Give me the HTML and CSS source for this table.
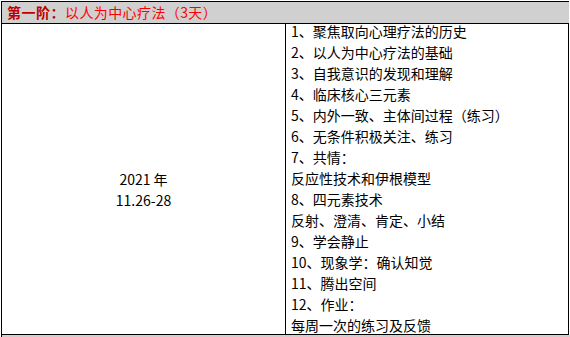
FILE: index.html
```html
<!DOCTYPE html>
<html lang="zh-CN">
<head>
<meta charset="utf-8">
<title>第一阶</title>
<link rel="stylesheet" href="styles.css">
</head>
<body>
<div class="sheet">
  <div class="header"><span class="stage">第一阶：</span><span class="title">以人为中心疗法（3天）</span></div>
  <div class="row">
    <div class="date">
      <div class="date-text">2021 年<br>11.26-28</div>
    </div>
    <div class="content">
      <div class="lines">
        1、聚焦取向心理疗法的历史<br>
        2、以人为中心疗法的基础<br>
        3、自我意识的发现和理解<br>
        4、临床核心三元素<br>
        5、内外一致、主体间过程（练习）<br>
        6、无条件积极关注、练习<br>
        7、共情：<br>
        反应性技术和伊根模型<br>
        8、四元素技术<br>
        反射、澄清、肯定、小结<br>
        9、学会静止<br>
        10、现象学：确认知觉<br>
        11、腾出空间<br>
        12、作业：<br>
        每周一次的练习及反馈
      </div>
    </div>
  </div>
  <div class="next"></div>
</div>
</body>
</html>
```
FILE: styles.css
```css
html, body {
  margin: 0;
  padding: 0;
  background: #ffffff;
  width: 570px;
  height: 337px;
  overflow: hidden;
}
body {
  font-family: "Noto Sans CJK SC", "Noto Sans", sans-serif;
  font-size: 14px;
  color: #000;
}
.sheet {
  padding: 1px 0 0 1px;
}
.header {
  width: 568px;
  height: 23px;
  line-height: 21px;
  background: #d0d0d0;
  border-top: 1px solid #000;
  border-left: 1px solid #000;
  border-bottom: 1px solid #000;
  padding-left: 5px;
  box-sizing: border-box;
  white-space: nowrap;
}
.stage {
  color: #c00000;
  font-weight: bold;
  letter-spacing: 0.5px;
}
.title {
  color: #ff0000;
  letter-spacing: 0.4px;
}
.row {
  display: flex;
  width: 568px;
  height: 311px;
  box-sizing: border-box;
  border-left: 1px solid #000;
  border-right: 1px solid #000;
  border-bottom: 1px solid #000;
}
.date {
  width: 284px;
  border-right: 1px solid #000;
  box-sizing: border-box;
  display: flex;
  align-items: center;
  justify-content: center;
  padding-top: 21px;
}
.date-text {
  text-align: center;
  line-height: 20.5px;
}
.content {
  flex: 1;
  padding-left: 5px;
  overflow: visible;
}
.lines {
  margin-top: -3px;
  line-height: 21px;
  white-space: nowrap;
}
.next {
  width: 569px;
  height: 4px;
  background: #d0d0d0;
  border-left: 1px solid #000;
  box-sizing: border-box;
}
```
